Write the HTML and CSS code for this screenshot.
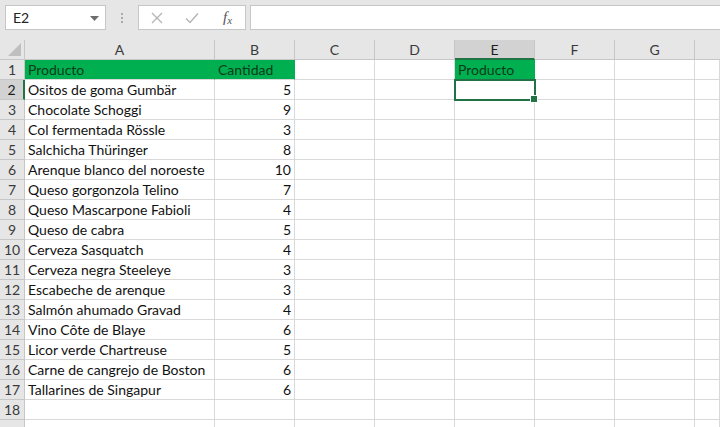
FILE: index.html
```html
<!DOCTYPE html>
<html lang="es">
<head>
<meta charset="utf-8">
<title>Hoja</title>
<link rel="stylesheet" href="styles.css">
</head>
<body>
<div class="app">
  <div class="toolbar">
    <div class="namebox">
      <span class="name">E2</span>
      <svg class="caret" width="9" height="5" viewBox="0 0 9 5"><path d="M0 0h9L4.5 5z" fill="#6d6d6d"/></svg>
    </div>
    <div class="grip"><span></span><span></span><span></span></div>
    <div class="fbuttons">
      <svg class="ic" width="12" height="12" viewBox="0 0 12 12"><path d="M1 1l10 10M11 1L1 11" stroke="#b4b4b4" stroke-width="1.3" fill="none"/></svg>
      <svg class="ic" width="14" height="12" viewBox="0 0 14 12"><path d="M1 6.5l4 4L13 1.5" stroke="#b4b4b4" stroke-width="1.4" fill="none"/></svg>
      <span class="fx">f<sub>x</sub></span>
    </div>
    <div class="finput"></div>
  </div>
  <div class="sheet">
    <div class="corner"><svg width="13" height="13" viewBox="0 0 13 13"><path d="M13 0v13H0z" fill="#bfbfbf"/></svg></div>
    <div class="ch">A</div><div class="ch">B</div><div class="ch">C</div><div class="ch">D</div><div class="ch sel">E</div><div class="ch">F</div><div class="ch">G</div><div class="ch last"></div>

    <div class="rh">1</div><div class="c g">Producto</div><div class="c g">Cantidad</div><div class="c"></div><div class="c"></div><div class="c g">Producto</div><div class="c"></div><div class="c"></div><div class="c"></div>
    <div class="rh sel">2</div><div class="c">Ositos de goma Gumbär</div><div class="c n">5</div><div class="c"></div><div class="c"></div><div class="c active"></div><div class="c"></div><div class="c"></div><div class="c"></div>
    <div class="rh">3</div><div class="c">Chocolate Schoggi</div><div class="c n">9</div><div class="c"></div><div class="c"></div><div class="c"></div><div class="c"></div><div class="c"></div><div class="c"></div>
    <div class="rh">4</div><div class="c">Col fermentada Rössle</div><div class="c n">3</div><div class="c"></div><div class="c"></div><div class="c"></div><div class="c"></div><div class="c"></div><div class="c"></div>
    <div class="rh">5</div><div class="c">Salchicha Thüringer</div><div class="c n">8</div><div class="c"></div><div class="c"></div><div class="c"></div><div class="c"></div><div class="c"></div><div class="c"></div>
    <div class="rh">6</div><div class="c">Arenque blanco del noroeste</div><div class="c n">10</div><div class="c"></div><div class="c"></div><div class="c"></div><div class="c"></div><div class="c"></div><div class="c"></div>
    <div class="rh">7</div><div class="c">Queso gorgonzola Telino</div><div class="c n">7</div><div class="c"></div><div class="c"></div><div class="c"></div><div class="c"></div><div class="c"></div><div class="c"></div>
    <div class="rh">8</div><div class="c">Queso Mascarpone Fabioli</div><div class="c n">4</div><div class="c"></div><div class="c"></div><div class="c"></div><div class="c"></div><div class="c"></div><div class="c"></div>
    <div class="rh">9</div><div class="c">Queso de cabra</div><div class="c n">5</div><div class="c"></div><div class="c"></div><div class="c"></div><div class="c"></div><div class="c"></div><div class="c"></div>
    <div class="rh">10</div><div class="c">Cerveza Sasquatch</div><div class="c n">4</div><div class="c"></div><div class="c"></div><div class="c"></div><div class="c"></div><div class="c"></div><div class="c"></div>
    <div class="rh">11</div><div class="c">Cerveza negra Steeleye</div><div class="c n">3</div><div class="c"></div><div class="c"></div><div class="c"></div><div class="c"></div><div class="c"></div><div class="c"></div>
    <div class="rh">12</div><div class="c">Escabeche de arenque</div><div class="c n">3</div><div class="c"></div><div class="c"></div><div class="c"></div><div class="c"></div><div class="c"></div><div class="c"></div>
    <div class="rh">13</div><div class="c">Salmón ahumado Gravad</div><div class="c n">4</div><div class="c"></div><div class="c"></div><div class="c"></div><div class="c"></div><div class="c"></div><div class="c"></div>
    <div class="rh">14</div><div class="c">Vino Côte de Blaye</div><div class="c n">6</div><div class="c"></div><div class="c"></div><div class="c"></div><div class="c"></div><div class="c"></div><div class="c"></div>
    <div class="rh">15</div><div class="c">Licor verde Chartreuse</div><div class="c n">5</div><div class="c"></div><div class="c"></div><div class="c"></div><div class="c"></div><div class="c"></div><div class="c"></div>
    <div class="rh">16</div><div class="c">Carne de cangrejo de Boston</div><div class="c n">6</div><div class="c"></div><div class="c"></div><div class="c"></div><div class="c"></div><div class="c"></div><div class="c"></div>
    <div class="rh">17</div><div class="c">Tallarines de Singapur</div><div class="c n">6</div><div class="c"></div><div class="c"></div><div class="c"></div><div class="c"></div><div class="c"></div><div class="c"></div>
    <div class="rh">18</div><div class="c"></div><div class="c"></div><div class="c"></div><div class="c"></div><div class="c"></div><div class="c"></div><div class="c"></div><div class="c"></div>
    <div class="rh"></div><div class="c"></div><div class="c"></div><div class="c"></div><div class="c"></div><div class="c"></div><div class="c"></div><div class="c"></div><div class="c"></div>
  </div>
</div>
</body>
</html>
```
FILE: styles.css
```css
* { box-sizing: border-box; }
html, body { margin: 0; padding: 0; }
body {
  width: 720px;
  height: 427px;
  overflow: hidden;
  background: #ffffff;
  font-family: Lato, "Open Sans", "Liberation Sans", sans-serif;
  font-size: 14px;
  color: #000;
}
.app { width: 720px; height: 427px; overflow: hidden; }

.toolbar {
  display: flex;
  align-items: flex-start;
  height: 40px;
  padding: 5px 0 0 5px;
  background: #e6e6e6;
}
.namebox {
  width: 101px;
  height: 25px;
  background: #fff;
  border: 1px solid #c6c6c6;
  display: flex;
  align-items: center;
  justify-content: space-between;
  padding: 0 6px 0 7px;
  font-size: 14px;
  color: #222;
}
.caret { margin-top: 1px; }
.grip {
  width: 32px;
  height: 25px;
  display: flex;
  flex-direction: column;
  align-items: center;
  justify-content: center;
  gap: 2px;
}
.grip span { width: 2px; height: 2px; background: #aaaaaa; }
.fbuttons {
  width: 108px;
  height: 25px;
  background: #fff;
  border: 1px solid #c6c6c6;
  display: flex;
  align-items: center;
  padding: 0 0 0 12px;
}
.fbuttons .ic:first-child { margin-right: 22px; }
.fbuttons .ic:nth-child(2) { margin-right: 24px; }
.fx {
  font-family: "Liberation Serif", serif;
  font-style: italic;
  font-size: 15px;
  color: #555;
  line-height: 1;
}
.fx sub { font-size: 11px; vertical-align: -2px; }
.finput {
  flex: 1;
  height: 25px;
  margin-left: 4px;
  background: #fff;
  border: 1px solid #c6c6c6;
  border-right: none;
}

.sheet {
  display: grid;
  grid-template-columns: 25px 190px repeat(6, 80px) 1fr;
  grid-auto-rows: 20px;
}
.corner {
  background: #e6e6e6;
  border-right: 1px solid #c6c6c6;
  border-bottom: 1px solid #c6c6c6;
  display: flex;
  align-items: flex-end;
  justify-content: flex-end;
  padding: 0 3px 3px 0;
}
.corner svg { display: block; }
.ch {
  background: #e6e6e6;
  border-right: 1px solid #c6c6c6;
  border-bottom: 1px solid #c6c6c6;
  color: #3a3a3a;
  text-align: center;
  line-height: 20px;
  font-size: 14px;
}
.ch.last { border-right: none; }
.ch.sel {
  background: #d2d2d2;
  border-bottom: 2px solid #217346;
  color: #1e1e1e;
}
.rh {
  background: #e6e6e6;
  border-right: 1px solid #c6c6c6;
  border-bottom: 1px solid #c6c6c6;
  color: #3a3a3a;
  text-align: center;
  line-height: 20px;
  font-size: 14px;
}
.rh.sel {
  background: #d2d2d2;
  border-right: 2px solid #217346;
  color: #1e1e1e;
}
.c {
  border-right: 1px solid #d9d9d9;
  border-bottom: 1px solid #d9d9d9;
  padding: 0 3px;
  line-height: 20px;
  white-space: nowrap;
  color: #111;
}
.c.n { text-align: right; }
.c.g {
  background: #00b050;
  border-right-color: #00b050;
  color: #0d3b1a;
}
.c.active {
  position: relative;
  outline: 2px solid #217346;
  outline-offset: -1px;
}
.c.active::after {
  content: "";
  position: absolute;
  right: -4px;
  bottom: -4px;
  width: 6px;
  height: 6px;
  background: #217346;
  border: 1px solid #fff;
}
```
